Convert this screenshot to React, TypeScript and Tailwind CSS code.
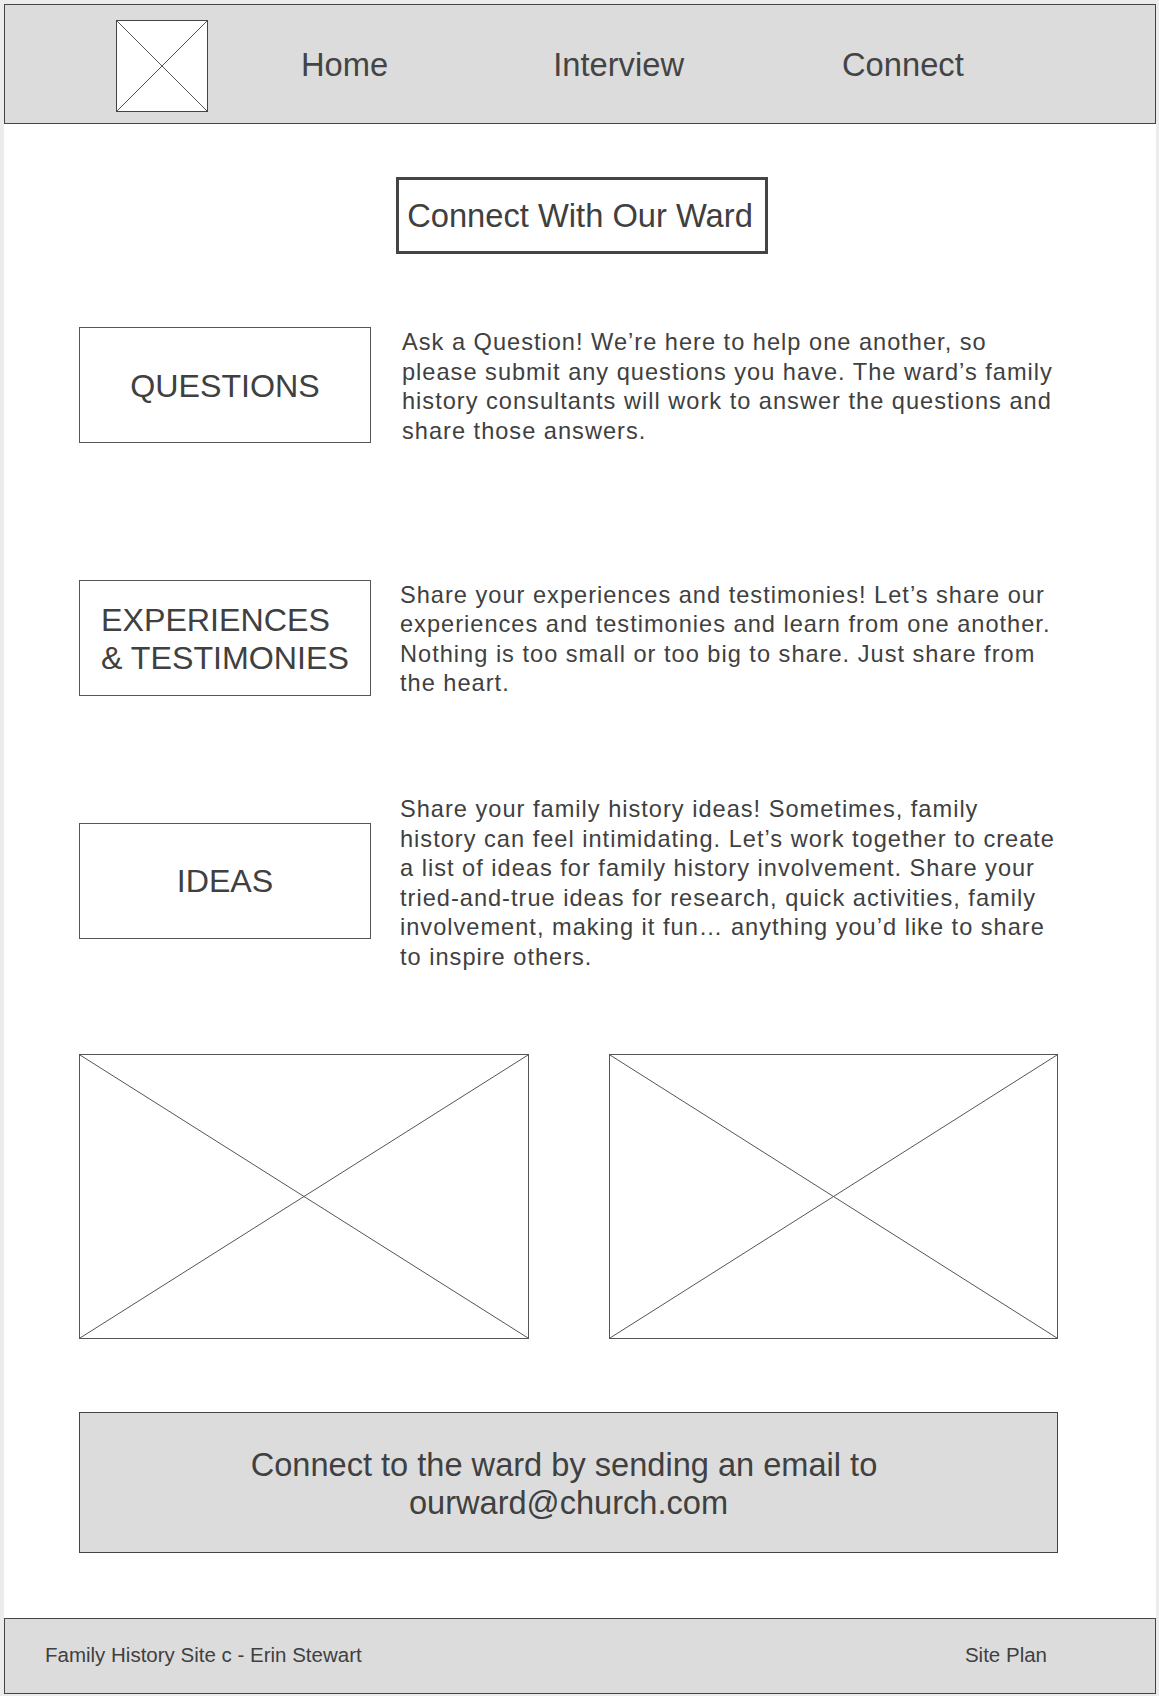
import React from "react";

function XBox({ className }: { className?: string }) {
  return (
    <div className={"relative bg-white border border-[#555] " + (className ?? "")}>
      <svg className="absolute inset-0 w-full h-full" preserveAspectRatio="none" viewBox="0 0 100 100">
        <line x1="0" y1="0" x2="100" y2="100" stroke="#555" strokeWidth="1" vectorEffect="non-scaling-stroke" />
        <line x1="100" y1="0" x2="0" y2="100" stroke="#555" strokeWidth="1" vectorEffect="non-scaling-stroke" />
      </svg>
    </div>
  );
}

function Row({
  label,
  lines,
  textCls,
  className,
}: {
  label: React.ReactNode;
  lines: string[];
  textCls: string;
  className?: string;
}) {
  return (
    <div className={"flex items-center ml-[75px] " + (className ?? "")}>
      <div className="w-[292px] h-[116px] shrink-0 border border-[#555] flex items-center justify-center pt-[1px] text-[32.2px] leading-[38px] text-[#404040]">
        {label}
      </div>
      <div className={"text-[23.6px] tracking-[1px] leading-[29.5px] text-[#404040] whitespace-nowrap " + textCls}>
        {lines.map((l, i) => (
          <div key={i}>{l}</div>
        ))}
      </div>
    </div>
  );
}

export default function App() {
  return (
    <div className="w-[1159px] h-[1696px] bg-[#ececec] pl-[4px] pt-[4px] pr-[3px] pb-[2px] font-['Liberation_Sans',Arial,sans-serif] text-[#404040]">
      <div className="flex flex-col h-full bg-white">
        <header className="h-[120px] shrink-0 border border-[#444] bg-[#dcdcdc] flex items-center pl-[111px] pt-[2px] text-[32.7px] text-[#444]">
          <XBox className="w-[92px] h-[92px] !border-[#444] mt-[2px]" />
          <span className="ml-[93px]">Home</span>
          <span className="ml-[165px]">Interview</span>
          <span className="ml-[158px]">Connect</span>
        </header>

        <div className="mt-[53px] ml-[3px] self-center w-[372px] h-[77px] border-[3px] border-[#444] flex items-center justify-center pr-[3px] text-[32.7px] text-[#404040]">
          Connect With Our Ward
        </div>

        <Row
          className="mt-[73px] h-[116px]"
          textCls="ml-[31px] pt-[4px]"
          label={<span>QUESTIONS</span>}
          lines={[
            "Ask a Question! We’re here to help one another, so",
            "please submit any questions you have. The ward’s family",
            "history consultants will work to answer the questions and",
            "share those answers.",
          ]}
        />

        <Row
          className="mt-[137px] h-[116px]"
          textCls="ml-[29px] pt-[3px]"
          label={
            <span className="inline-block text-left">
              EXPERIENCES
              <br />& TESTIMONIES
            </span>
          }
          lines={[
            "Share your experiences and testimonies! Let’s share our",
            "experiences and testimonies and learn from one another.",
            "Nothing is too small or too big to share. Just share from",
            "the heart.",
          ]}
        />

        <Row
          className="mt-[96px] h-[177px]"
          textCls="ml-[29px] pt-[6px]"
          label={<span>IDEAS</span>}
          lines={[
            "Share your family history ideas! Sometimes, family",
            "history can feel intimidating. Let’s work together to create",
            "a list of ideas for family history involvement. Share your",
            "tried-and-true ideas for research, quick activities, family",
            "involvement, making it fun… anything you’d like to share",
            "to inspire others.",
          ]}
        />

        <div className="mt-[85px] ml-[75px] w-[979px] h-[285px] grid grid-cols-[450px_449px] gap-[80px]">
          <XBox className="h-full" />
          <XBox className="h-full" />
        </div>

        <div className="mt-[73px] ml-[75px] w-[979px] h-[141px] bg-[#dcdcdc] border border-[#444] flex items-center justify-center pt-[3px] text-center text-[32.6px] leading-[38px] text-[#404040]">
          <div>
            {"Connect to the ward by sending an email to\u00a0"}
            <br />
            ourward@church.com
          </div>
        </div>

        <footer className="mt-auto h-[76px] shrink-0 border border-[#444] bg-[#dcdcdc] flex items-center justify-between pl-[40px] pr-[108px] pb-[2px] text-[20.5px] text-[#404040]">
          <span>Family History Site c - Erin Stewart</span>
          <span>Site Plan</span>
        </footer>
      </div>
    </div>
  );
}
